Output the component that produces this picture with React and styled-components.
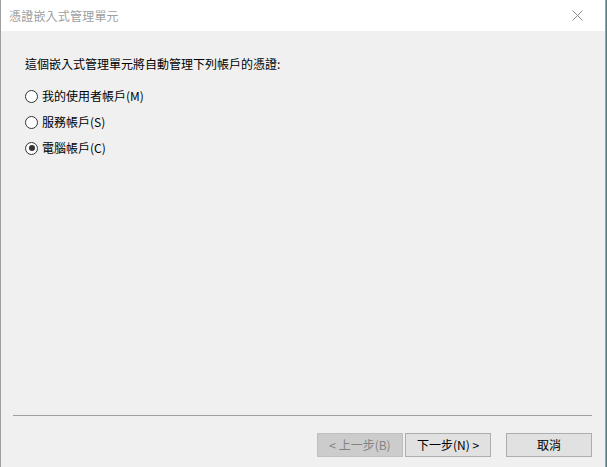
import React, { useState } from 'react';
import styled, { createGlobalStyle } from 'styled-components';

const Global = createGlobalStyle`
  html, body {
    margin: 0;
    padding: 0;
    background: #5a7f86;
  }
  body {
    font-family: "Noto Sans CJK TC", "Noto Sans", sans-serif;
  }
`

const Window = styled.div`
  width: 604px;
  height: 467px;
  border-left: 1px solid #a0a0a0;
  border-right: 1px solid #a0a0a0;
  background: #f0f0f0;
  display: flex;
  flex-direction: column;
`

const TitleBar = styled.div`
  height: 31px;
  background: #ffffff;
  display: flex;
  align-items: center;
  justify-content: space-between;
  padding: 0 22px 0 8px;
  flex-shrink: 0;
`

const Title = styled.div`
  font-size: 12px;
  color: #a0a0a0;
  letter-spacing: 0.2px;
`

const Close = styled.svg`
  width: 11px;
  height: 11px;
`

const Body = styled.div`
  flex: 1;
  padding: 25px 24px 0 24px;
  display: flex;
  flex-direction: column;
`

const Prompt = styled.div`
  font-size: 12px;
  line-height: 16px;
  color: #000;
  margin-bottom: 16px;
`

const Options = styled.div`
  display: flex;
  flex-direction: column;
  gap: 10px;
`

const Option = styled.label`
  display: flex;
  align-items: center;
  gap: 4px;
  font-size: 12px;
  line-height: 16px;
  color: #000;
  cursor: default;
`

const Circle = styled.span`
  width: 11px;
  height: 11px;
  border: 1px solid #333;
  border-radius: 50%;
  background: #fff;
  display: flex;
  align-items: center;
  justify-content: center;
  box-sizing: content-box;
`

const Dot = styled.span`
  width: 6px;
  height: 6px;
  border-radius: 50%;
  background: #333;
`

const Footer = styled.div`
  display: flex;
  flex-direction: column;
  padding: 0 13px 10px 12px;
`

const Separator = styled.div`
  height: 1px;
  background: #a0a0a0;
  margin-bottom: 17px;
`

const Buttons = styled.div`
  display: flex;
  justify-content: flex-end;
  align-items: center;
  height: 24px;
`

const Button = styled.button`
  width: 86px;
  height: 24px;
  box-sizing: border-box;
  font-family: inherit;
  font-size: 12px;
  line-height: 16px;
  padding: 0;
  margin-left: ${p => p.$gap || 0}px;
  background: ${p => (p.disabled ? '#cccccc' : '#e1e1e1')};
  border: 1px solid ${p => (p.disabled ? '#bfbfbf' : '#adadad')};
  color: ${p => (p.disabled ? '#838383' : '#000')};
  border-radius: 0;
`

const options = [
  { id: 'user', label: '我的使用者帳戶(M)' },
  { id: 'service', label: '服務帳戶(S)' },
  { id: 'computer', label: '電腦帳戶(C)' },
]

function App() {
  const [selected, setSelected] = useState('computer');

  return (
    <>
      <Global />
      <Window>
        <TitleBar>
          <Title>憑證嵌入式管理單元</Title>
          <Close viewBox="0 0 11 11">
            <path d="M0.5 0.5 L10.5 10.5 M10.5 0.5 L0.5 10.5" stroke="#8a8a8a" strokeWidth="1" fill="none" />
          </Close>
        </TitleBar>
        <Body>
          <Prompt>這個嵌入式管理單元將自動管理下列帳戶的憑證:</Prompt>
          <Options>
            {options.map(o => (
              <Option key={o.id} onClick={() => setSelected(o.id)}>
                <Circle>{selected === o.id && <Dot />}</Circle>
                {o.label}
              </Option>
            ))}
          </Options>
        </Body>
        <Footer>
          <Separator />
          <Buttons>
            <Button disabled>&lt; 上一步(B)</Button>
            <Button $gap={2}>下一步(N) &gt;</Button>
            <Button $gap={15}>取消</Button>
          </Buttons>
        </Footer>
      </Window>
    </>
  );
}

export default App;
